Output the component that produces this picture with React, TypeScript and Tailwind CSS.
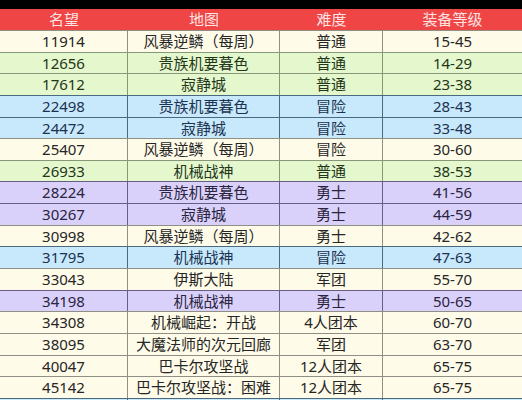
import React from 'react'

type Tone = 'cream' | 'green' | 'blue' | 'purple'

const rows: [string, string, string, string, Tone][] = [
  ['11914', '风暴逆鳞（每周）', '普通', '15-45', 'cream'],
  ['12656', '贵族机要暮色', '普通', '14-29', 'green'],
  ['17612', '寂静城', '普通', '23-38', 'green'],
  ['22498', '贵族机要暮色', '冒险', '28-43', 'blue'],
  ['24472', '寂静城', '冒险', '33-48', 'blue'],
  ['25407', '风暴逆鳞（每周）', '冒险', '30-60', 'cream'],
  ['26933', '机械战神', '普通', '38-53', 'green'],
  ['28224', '贵族机要暮色', '勇士', '41-56', 'purple'],
  ['30267', '寂静城', '勇士', '44-59', 'purple'],
  ['30998', '风暴逆鳞（每周）', '勇士', '42-62', 'cream'],
  ['31795', '机械战神', '冒险', '47-63', 'blue'],
  ['33043', '伊斯大陆', '军团', '55-70', 'cream'],
  ['34198', '机械战神', '勇士', '50-65', 'purple'],
  ['34308', '机械崛起：开战', '4人团本', '60-70', 'cream'],
  ['38095', '大魔法师的次元回廊', '军团', '63-70', 'cream'],
  ['40047', '巴卡尔攻坚战', '12人团本', '65-75', 'cream'],
  ['45142', '巴卡尔攻坚战：困难', '12人团本', '65-75', 'cream'],
  ['', '', '', '', 'blue'],
]

const toneClass: Record<Tone, string> = {
  cream: 'bg-[#fefbe9] text-[#262626] border-[#8f8f86]',
  green: 'bg-[#e5f7cd] text-[#22361a] border-[#86977a]',
  blue: 'bg-[#c8e8fc] text-[#1b3350] border-[#4a6a82]',
  purple: 'bg-[#d9d1f9] text-[#2a2440] border-[#675e84]',
}

const font = { fontFamily: '"Noto Sans", "Noto Sans CJK SC", sans-serif' }

export default function App() {
  return (
    <div className="w-[522px] h-[400px] overflow-hidden bg-black pt-[9px]" style={font}>
      <div className="grid grid-cols-[128px_152px_103px_139px] h-[21px] bg-[#ef4545] text-[#fde3e3] text-[15px] leading-[21px] text-center">
        <div>名望</div>
        <div>地图</div>
        <div>难度</div>
        <div>装备等级</div>
      </div>
      {rows.map((r, i) => (
        <div
          key={i}
          className={`grid grid-cols-[128px_152px_103px_139px] h-[21.65px] border-t text-[15px] leading-[20px] text-center ${toneClass[r[4]]}`}
        >
          <div className="border-r border-inherit">{r[0]}</div>
          <div className="border-r border-inherit whitespace-nowrap overflow-hidden">{r[1]}</div>
          <div className="border-r border-inherit whitespace-nowrap">{r[2]}</div>
          <div>{r[3]}</div>
        </div>
      ))}
    </div>
  )
}
